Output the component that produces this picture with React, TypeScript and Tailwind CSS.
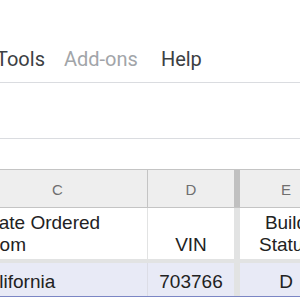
import { useEffect } from 'react';

const sans = { fontFamily: '"Liberation Sans", Arial, sans-serif' };

function App() {
  useEffect(() => {
    document.title = 'Sheet';
  }, []);

  return (
    <div className="w-[300px] h-[300px] overflow-hidden bg-white">
      {/* Menu bar */}
      <div
        className="h-[83px] border-b border-[#dadce0] flex items-start pt-[49px] text-[20px] leading-[20px] whitespace-nowrap"
        style={{ fontFamily: 'Roboto, "Liberation Sans", sans-serif' }}
      >
        <span className="ml-[-4px] text-[#3c4043]">Tools</span>
        <span className="ml-[19px] text-[#a2a5a9]">Add-ons</span>
        <span className="ml-[23px] text-[#3c4043]">Help</span>
      </div>

      {/* Toolbar (empty) */}
      <div className="h-[56px] border-b border-[#dadce0]" />

      <div className="h-[30px]" />

      {/* Grid */}
      <div className="w-[300px] overflow-hidden text-[#222222]" style={sans}>
        {/* Column headers */}
        <div className="flex h-[39px] border-y border-[#c4c4c4] bg-[#eeeeee] text-[15px] text-[#6f6f6f]">
          <div className="w-[148px] shrink-0 border-r border-[#c4c4c4] flex items-center pl-[52px] pt-[3px]">C</div>
          <div className="w-[92px] shrink-0 border-r-[6px] border-[#c0c0c0] flex items-center justify-center pt-[3px]">D</div>
          <div className="w-[92px] shrink-0 flex items-center justify-center pt-[3px]">E</div>
        </div>

        {/* Row 1 */}
        <div className="flex h-[51px] text-[19px] leading-[22px]">
          <div className="w-[148px] shrink-0 border-r border-[#e2e3e3] flex flex-col justify-end pb-[3px] whitespace-nowrap overflow-hidden">
            <span className="ml-[-15px]">Date Ordered</span>
            <span className="ml-[-12px]">from</span>
          </div>
          <div className="w-[92px] shrink-0 border-r-[6px] border-[#e2e3e3] flex items-end justify-center pb-[3px]">VIN</div>
          <div className="w-[92px] shrink-0 flex flex-col items-center justify-end pb-[3px] whitespace-nowrap">
            <span>Build</span>
            <span>Status</span>
          </div>
        </div>

        {/* Frozen row divider */}
        <div className="h-[4px] bg-[#e2e3e3]" />

        {/* Row 2 (selected) */}
        <div className="flex h-[34px] bg-[#e8eaf6] border-b border-[#7b86c4] text-[19px] leading-[22px]">
          <div className="w-[148px] shrink-0 border-r border-[#dcdde6] flex items-end pb-[3px] whitespace-nowrap overflow-hidden">
            <span className="ml-[-25px]">California</span>
          </div>
          <div className="w-[92px] shrink-0 border-r-[6px] border-[#e2e3e3] flex items-end justify-center pb-[3px]">703766</div>
          <div className="w-[92px] shrink-0 flex items-end justify-center pb-[3px]">D</div>
        </div>
      </div>
    </div>
  );
}

export default App;
